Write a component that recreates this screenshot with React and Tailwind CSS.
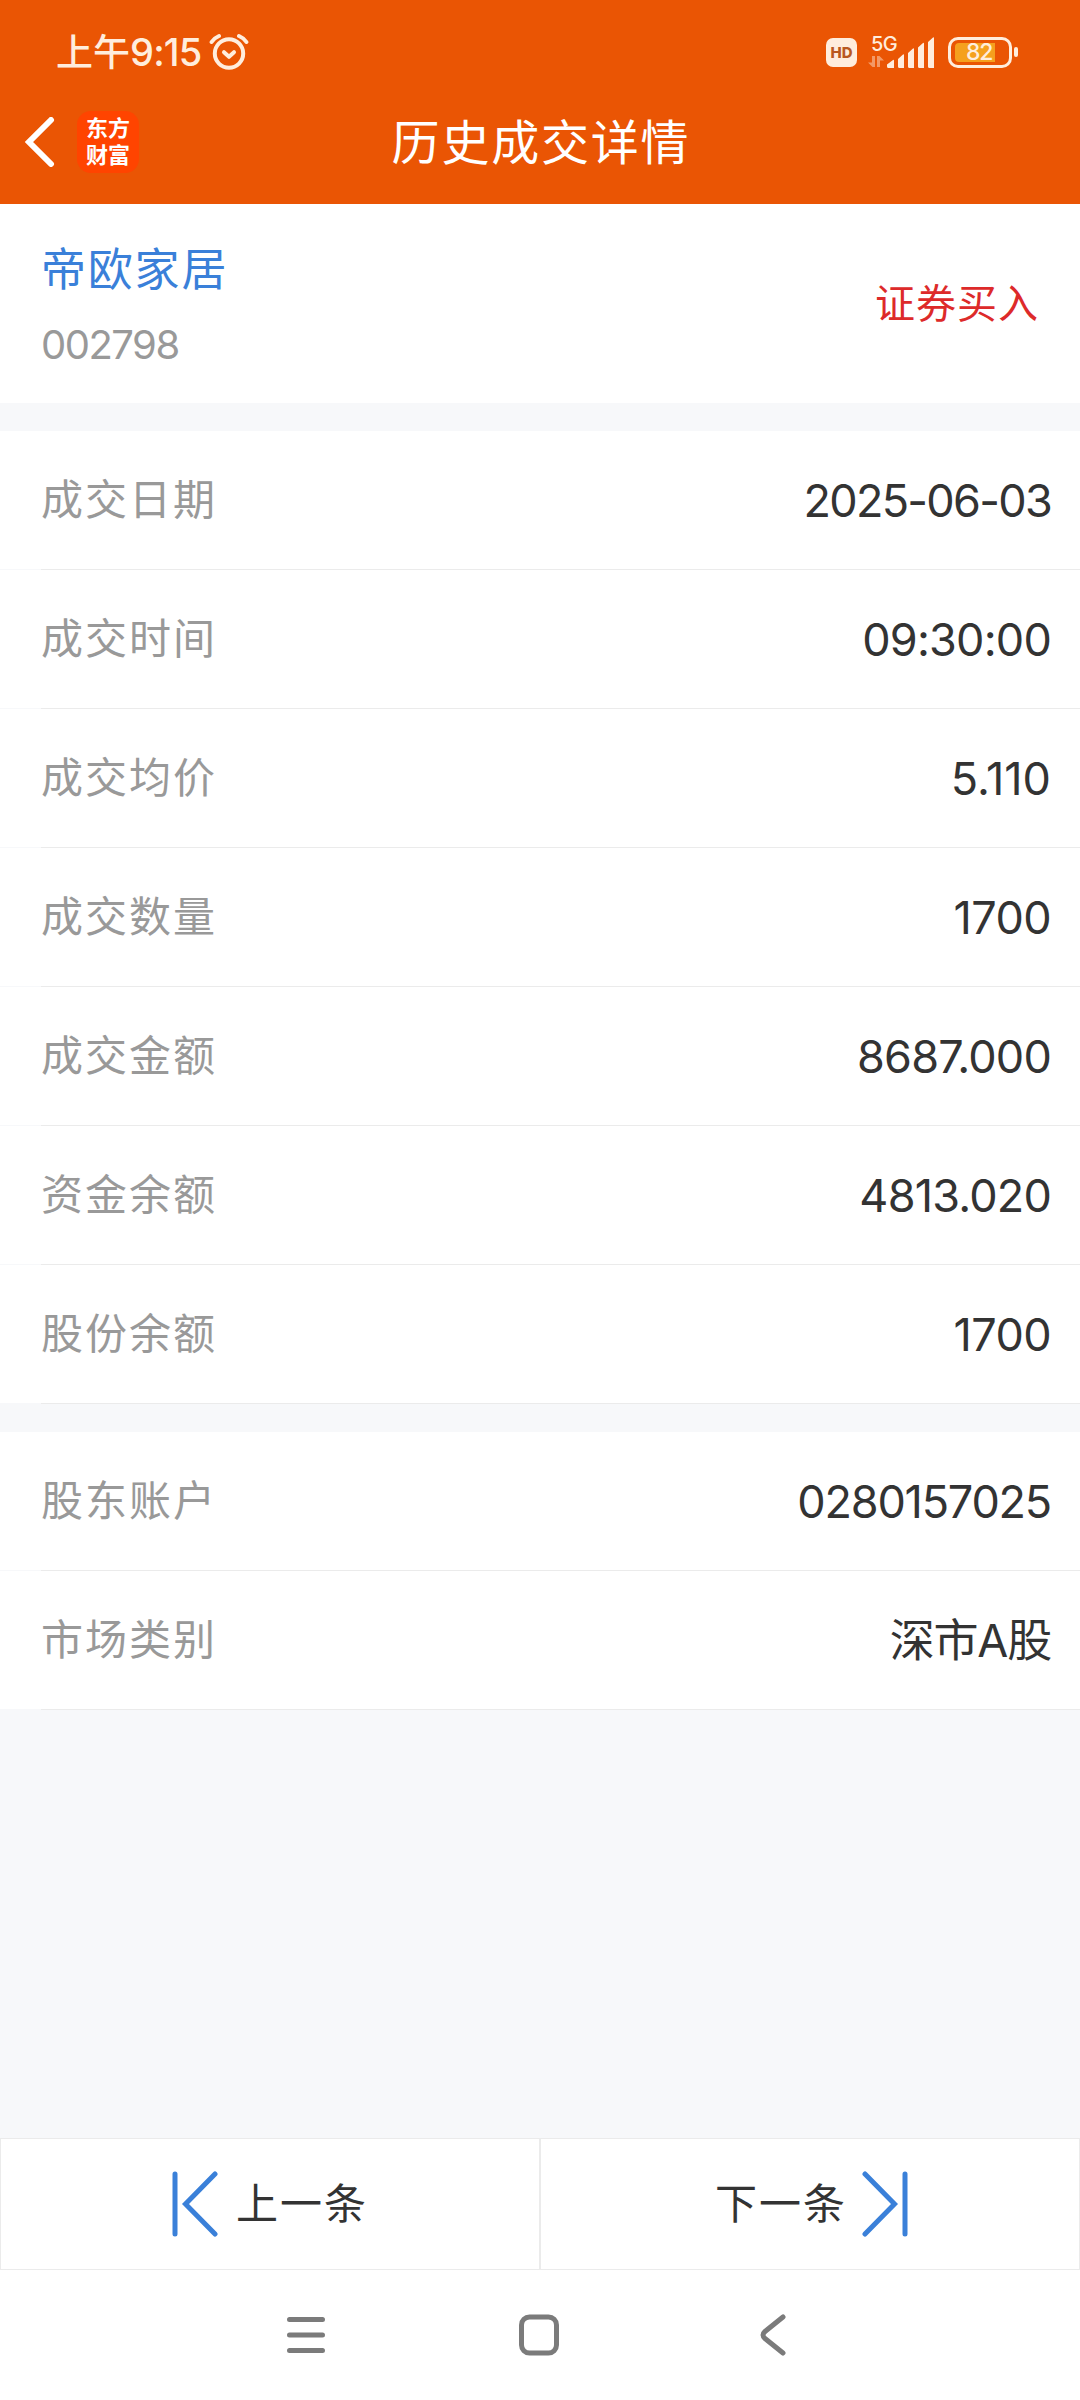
const TRADE_ROWS = [
  { label: "成交日期", value: "2025-06-03", tracking: "tracking-[-1.700px]" },
  { label: "成交时间", value: "09:30:00", tracking: "tracking-[-0.8px]" },
  { label: "成交均价", value: "5.110", tracking: "tracking-normal" },
  { label: "成交数量", value: "1700", tracking: "tracking-[-0.6px]" },
  { label: "成交金额", value: "8687.000", tracking: "tracking-[-0.8px]" },
  { label: "资金余额", value: "4813.020", tracking: "tracking-[-0.8px]" },
  { label: "股份余额", value: "1700", tracking: "tracking-[-0.6px]" },
];

const ACCOUNT_ROWS = [
  { label: "股东账户", value: "0280157025", tracking: "tracking-[-1.200px]" },
  { label: "市场类别", value: "深市A股", tracking: "tracking-[-1.200px]" },
];

function AlarmIcon() {
  return (
    <svg viewBox="0 0 40 38" className="h-[38px] w-10" fill="none" stroke="currentColor" strokeWidth="4" strokeLinecap="round" strokeLinejoin="round">
      <circle cx="20" cy="20.5" r="14.2" />
      <path d="M15 19.2l5 4.6 5-4.6" />
      <path d="M2.6 9Q5.200 5 10 3M37.400 9Q34.800 5 30 3" />
    </svg>
  );
}

function SignalIcon() {
  return (
    <svg viewBox="0 0 68 36" className="h-9 w-[68px]" fill="currentColor">
      <path opacity="0.45" d="M4 22h3v11H4.500L0 28.500h4zM9 22h2.500l4.500 4.500h-4V33H9z" />
      <path d="M19 30.500l6-4.500q1-.5 1 .8V34h-5.500q-1.500 0-1.500-1.500zM30 25l5-4.500q1-.5 1 .8V34h-4.500q-1.500 0-1.500-1.500zM40 19l5-4.500q1-.5 1 .8V34h-4.500q-1.500 0-1.500-1.500zM50 13.500l5-4.500q1-.5 1 .8V34h-4.500q-1.500 0-1.500-1.500zM60 8l5-4.500q1-.5 1 .8V34h-4.500q-1.500 0-1.500-1.500z" />
    </svg>
  );
}

function StatusBar() {
  return (
    <div className="flex h-[104px] items-center justify-between pl-14 pr-[62px] text-[#ffeddd]">
      <div className="flex items-center">
        <span className="text-[37px] leading-none font-medium">上午</span>
        <span className="text-[38px] leading-none font-medium tracking-[-0.8px]">9:15</span>
        <span className="ml-[7px]"><AlarmIcon /></span>
      </div>
      <div className="flex items-center">
        <span className="flex h-[29px] w-[31px] items-center justify-center rounded-[7px] bg-[#ffeddd] text-[15px] font-extrabold leading-none text-[#b9581f]">HD</span>
        <div className="relative ml-[11px]">
          <SignalIcon />
          <span className="absolute top-0 left-[3px] text-[20px] leading-none font-medium tracking-[-0.5px]">5G</span>
        </div>
        <span className="ml-3 flex h-[31px] w-[64px] items-center rounded-[10px] border-[3px] border-current px-1">
          <span className="relative h-[19px] w-10 rounded-l-[4px] bg-[#f5a01e]">
            <span className="absolute top-[-2px] left-[11px] text-[23px] leading-none font-medium tracking-[-1.200px]">82</span>
          </span>
        </span>
        <span className="ml-[2px] h-[10px] w-1 rounded-full bg-current" />
      </div>
    </div>
  );
}

function TitleBar() {
  return (
    <div className="grid h-[100px] grid-cols-[1fr_auto_1fr] items-center pb-[25px] text-white">
      <div className="flex items-center pl-6">
        <svg viewBox="0 0 31 50" className="h-[50px] w-[31px]" fill="none" stroke="currentColor" strokeWidth="6" strokeLinecap="round" strokeLinejoin="miter">
          <path d="M27 3L5 25l22 22" />
        </svg>
        <div className="ml-[22px] flex h-[62px] w-[62px] items-center justify-center rounded-[14px] bg-[#ff4400]">
          <span className="w-[44px] text-[22px] leading-[27px] font-bold break-all">东方财富</span>
        </div>
      </div>
      <h1 className="pt-[2px] pl-[2px] text-[48px] leading-none tracking-[1.800px]">历史成交详情</h1>
    </div>
  );
}

function DetailRow({ row }) {
  return (
    <div>
      <div className="flex h-[138px] items-center justify-between bg-white pr-[29px] pl-[41px]">
        <span className="text-[42px] leading-none tracking-[2px] text-[#999999]">{row.label}</span>
        <span className={`text-[45px] leading-none text-[#333333] ${row.tracking}`}>{row.value}</span>
      </div>
      <div className="ml-[41px] h-px bg-[#ebebeb]" />
    </div>
  );
}

function DetailGroup({ rows }) {
  return (
    <section className="mt-7">
      {rows.map((row) => (
        <DetailRow key={row.label} row={row} />
      ))}
    </section>
  );
}

function StepIcon({ flipped }) {
  return (
    <svg viewBox="0 0 46 66" className={`h-[66px] w-[46px] text-[#3a80d9] ${flipped ? "-scale-x-100" : ""}`} fill="none" stroke="currentColor" strokeWidth="5" strokeLinecap="round">
      <path d="M3 3v60M43 3L13.500 33 43 63" />
    </svg>
  );
}

function Pager() {
  return (
    <div className="grid h-[132px] grid-cols-2 bg-white text-[42px] leading-none text-[#333333]">
      <button type="button" className="flex items-center justify-center gap-[18px] border border-[#ebebeb]">
        <StepIcon />
        <span className="tracking-[2px]">上一条</span>
      </button>
      <button type="button" className="flex items-center justify-center gap-[15px] border border-[#ebebeb] pl-[3px]">
        <span className="tracking-[2px]">下一条</span>
        <StepIcon flipped />
      </button>
    </div>
  );
}

function NavBar() {
  return (
    <div className="flex h-[130px] items-center bg-white pl-[286px] text-[#7b7b7b]">
      <svg viewBox="0 0 40 42" className="h-[42px] w-10" fill="none" stroke="currentColor" strokeWidth="5" strokeLinecap="round">
        <path d="M3.500 5.500h33M3.500 21h33M3.500 36.500h33" />
      </svg>
      <svg viewBox="0 0 40 42" className="ml-[193px] h-[42px] w-10" fill="none" stroke="currentColor" strokeWidth="5">
        <rect x="2.500" y="3" width="35" height="36" rx="8" />
      </svg>
      <svg viewBox="0 0 26 42" className="ml-[201px] h-[42px] w-[26px]" fill="none" stroke="currentColor" strokeWidth="5" strokeLinecap="round">
        <path d="M23 3L5 17.500q-4 3.500 0 7L23 39" />
      </svg>
    </div>
  );
}

export default function App() {
  return (
    <div className="flex h-[2400px] w-[1080px] flex-col bg-[#f7f8fa] font-['Inter','Noto_Sans_CJK_SC',sans-serif]">
      <header className="bg-[#ea5504]">
        <StatusBar />
        <TitleBar />
      </header>
      <section className="flex h-[199px] items-center justify-between bg-white pr-[41px] pl-[41px]">
        <div className="pt-1">
          <div className="text-[45px] leading-none tracking-[1.800px] text-[#3a80d9]">帝欧家居</div>
          <div className="mt-[33px] text-[40px] leading-none tracking-[-1.500px] text-[#999999]">002798</div>
        </div>
        <div className="text-[40px] leading-none tracking-[1px] text-[#dd2a2a]">证券买入</div>
      </section>
      <DetailGroup rows={TRADE_ROWS} />
      <DetailGroup rows={ACCOUNT_ROWS} />
      <div className="mt-auto">
        <Pager />
        <NavBar />
      </div>
    </div>
  );
}
